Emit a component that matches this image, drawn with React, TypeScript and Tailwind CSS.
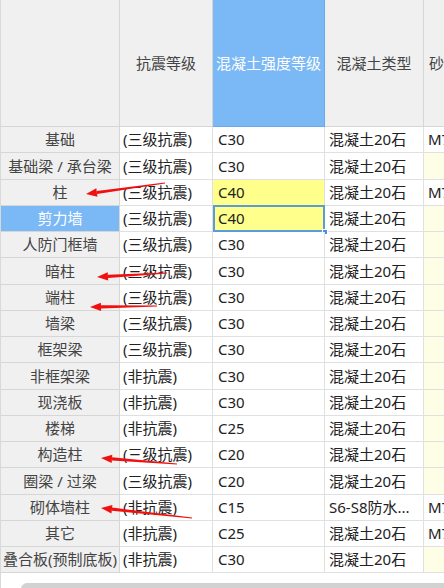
import React from "react";

type Row = { name: string; level: string; grade: string; type: string; m?: string; hl?: boolean; sel?: boolean; yellow?: boolean };

const rows: Row[] = [
  { name: "基础", level: "(三级抗震)", grade: "C30", type: "混凝土20石", m: "M7.5" },
  { name: "基础梁 / 承台梁", level: "(三级抗震)", grade: "C30", type: "混凝土20石" },
  { name: "柱", level: "(三级抗震)", grade: "C40", type: "混凝土20石", m: "M7.5", yellow: true },
  { name: "剪力墙", level: "(三级抗震)", grade: "C40", type: "混凝土20石", yellow: true, sel: true, hl: true },
  { name: "人防门框墙", level: "(三级抗震)", grade: "C30", type: "混凝土20石" },
  { name: "暗柱", level: "(三级抗震)", grade: "C30", type: "混凝土20石" },
  { name: "端柱", level: "(三级抗震)", grade: "C30", type: "混凝土20石" },
  { name: "墙梁", level: "(三级抗震)", grade: "C30", type: "混凝土20石" },
  { name: "框架梁", level: "(三级抗震)", grade: "C30", type: "混凝土20石" },
  { name: "非框架梁", level: "(非抗震)", grade: "C30", type: "混凝土20石" },
  { name: "现浇板", level: "(非抗震)", grade: "C30", type: "混凝土20石" },
  { name: "楼梯", level: "(非抗震)", grade: "C25", type: "混凝土20石" },
  { name: "构造柱", level: "(三级抗震)", grade: "C20", type: "混凝土20石" },
  { name: "圈梁 / 过梁", level: "(三级抗震)", grade: "C20", type: "混凝土20石" },
  { name: "砌体墙柱", level: "(非抗震)", grade: "C15", type: "S6-S8防水...", m: "M7.5" },
  { name: "其它", level: "(非抗震)", grade: "C25", type: "混凝土20石", m: "M7.5" },
  { name: "叠合板(预制底板)", level: "(非抗震)", grade: "C30", type: "混凝土20石" },
];

const font = { fontFamily: '"Noto Sans", "Noto Sans CJK SC", sans-serif' };

function Arrow({ x1, y1, x2, y2 }: { x1: number; y1: number; x2: number; y2: number }) {
  const dx = x2 - x1;
  const dy = y2 - y1;
  const len = Math.hypot(dx, dy);
  const ux = dx / len;
  const uy = dy / len;
  const hl = 11;
  const hw = 4.2;
  const bx = x2 - ux * hl;
  const by = y2 - uy * hl;
  const nx = -uy;
  const ny = ux;
  const tw = 0.4;
  const bw = 1.6;
  const shaft = [
    `${x1 + nx * tw},${y1 + ny * tw}`,
    `${bx + nx * bw},${by + ny * bw}`,
    `${bx - nx * bw},${by - ny * bw}`,
    `${x1 - nx * tw},${y1 - ny * tw}`,
  ].join(" ");
  const p1 = `${bx + nx * hw},${by + ny * hw}`;
  const p2 = `${bx - nx * hw},${by - ny * hw}`;
  return (
    <g>
      <polygon points={shaft} fill="#f01010" />
      <polygon points={`${x2},${y2} ${p1} ${p2}`} fill="#f01010" />
    </g>
  );
}

export default function App() {
  return (
    <div className="relative w-[444px] h-[588px] overflow-hidden bg-white text-[15px]" style={font}>
      <div className="border-l border-[#d9d9d9] h-full">
        <div className="grid grid-cols-[119px_93px_112px_99px_40px]">
          <div className="h-[127px] bg-[#f0f0f0] border-r border-b border-[#d6d6d6]" />
          <div className="h-[127px] bg-[#f0f0f0] border-r border-b border-[#d6d6d6] flex items-center justify-center text-[#444]">抗震等级</div>
          <div className="h-[127px] bg-[#7ab8f6] border-r border-b border-[#6aa8e8] flex items-center justify-center text-white whitespace-nowrap">混凝土强度等级</div>
          <div className="h-[127px] bg-[#f0f0f0] border-r border-b border-[#d6d6d6] flex items-center justify-center text-[#444]">混凝土类型</div>
          <div className="h-[127px] bg-[#f0f0f0] border-b border-[#d6d6d6] flex items-center pl-[5px] text-[#444] whitespace-nowrap overflow-hidden">砂浆标号</div>

          {rows.map((r, i) => (
            <React.Fragment key={i}>
              <div
                className={`h-[26.25px] border-r border-b border-[#d6d6d6] flex items-center justify-center whitespace-nowrap ${
                  r.hl ? "bg-[#7ab8f6] text-white" : "bg-[#f0f0f0] text-[#444]"
                }`}
              >
                {r.name}
              </div>
              <div className="h-[26.25px] border-r border-b border-[#e0e0e0] flex items-center pl-[3px] text-[#222] whitespace-nowrap">{r.level}</div>
              <div
                className={`relative h-[26.25px] border-r border-b border-[#e0e0e0] flex items-center pl-[5px] text-[#222] ${
                  r.yellow ? "bg-[#ffff8c]" : "bg-white"
                }`}
              >
                {r.grade}
                {r.sel && (
                  <>
                    <div className="absolute left-0 top-[-1px] right-[-1px] bottom-[-1px] border-2 border-[#5b9bd8]" />
                    <div className="absolute right-[-4px] bottom-[-4px] w-[6px] h-[6px] bg-[#4a90e0] border border-white" />
                  </>
                )}
              </div>
              <div className="h-[26.25px] border-r border-b border-[#e0e0e0] flex items-center pl-[4px] text-[#222] whitespace-nowrap overflow-hidden">{r.type}</div>
              <div
                className={`h-[26.25px] border-b border-[#e0e0e0] flex items-center pl-[4px] text-[#222] whitespace-nowrap overflow-hidden ${
                  r.m ? "bg-white" : "bg-[#fefde6]"
                }`}
              >
                {r.m ?? ""}
              </div>
            </React.Fragment>
          ))}
        </div>
        <div className="pt-[10px] pl-[20px]">
          <div className="h-[12px] rounded-l-full bg-[#d2d2d2]" />
        </div>
      </div>

      <svg className="absolute left-0 top-0 pointer-events-none" width={444} height={588}>
        <Arrow x1={165} y1={183} x2={86} y2={194} />
        <Arrow x1={167} y1={273} x2={97} y2={277} />
        <Arrow x1={157} y1={306} x2={90} y2={307} />
        <Arrow x1={177} y1={464} x2={101} y2={458} />
        <Arrow x1={192} y1={518} x2={101} y2={508} />
      </svg>
    </div>
  );
}
